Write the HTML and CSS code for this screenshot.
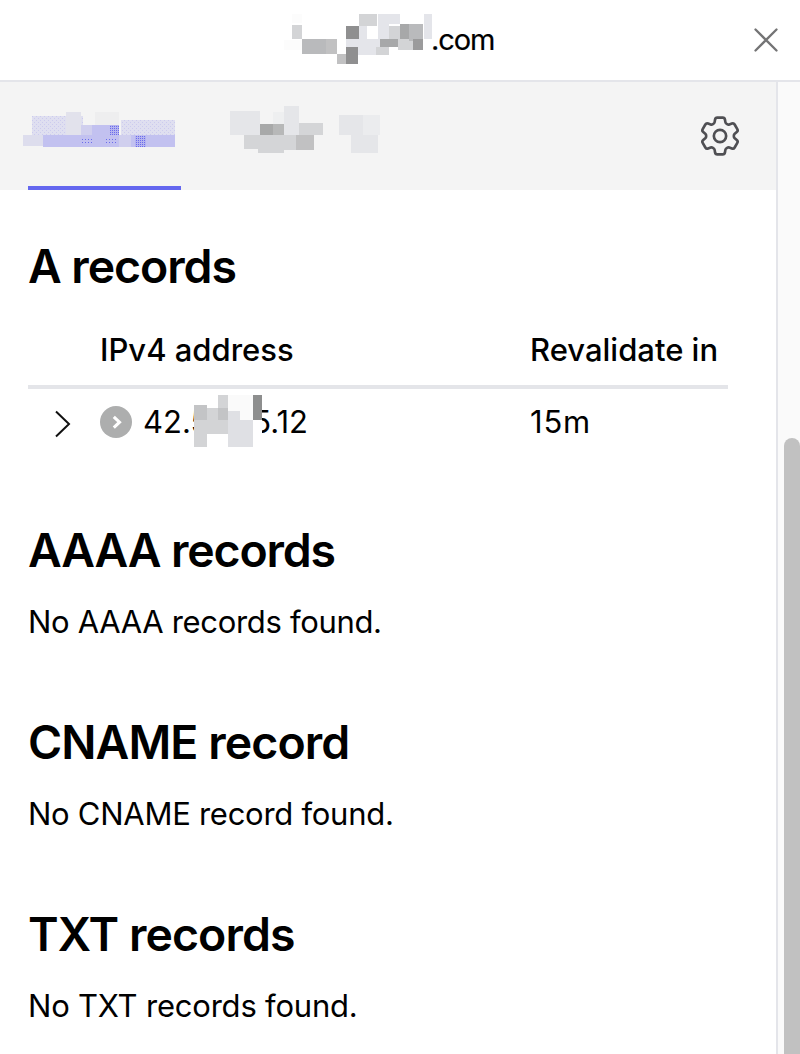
FILE: index.html
```html
<!DOCTYPE html>
<html lang="en">
<head>
<meta charset="utf-8">
<title>DNS records</title>
<link rel="stylesheet" href="styles.css">
</head>
<body>
<header class="titlebar">
  <div class="domain">
    <svg class="domain-mask" width="142" height="52" shape-rendering="crispEdges">
      <path fill="#fcfcfc" d="M2 2h10v9H2zM-6 28h18v10H-6z"/>
      <path fill="#d3d4d6" d="M2 13h10v14H2zM69 2h18v12H69zM99 14h11v15H99zM108 27h16v11h-16zM86 35h13v8H86z"/>
      <path fill="#b9babc" d="M12 27h24v15H12zM119 12h14v17h-14z"/>
      <path fill="#c1c1c2" d="M36 27h11v15H36zM47 42h9v10h-9z"/>
      <path fill="#8f8f90" d="M56 14h13v13H56zM56 35h12v17H56z"/>
      <path fill="#e4e5ea" d="M56 27h34v8H56zM68 35h18v8H68zM69 14h8v13h-8zM88 2h11v25H88zM99 2h11v10H99zM134 2h8v25h-8z"/>
      <path fill="#a7a8a9" d="M110 12h9v15h-9zM90 27h18v8H90z"/>
      <path fill="#9b9b9c" d="M123 27h10v11h-10z"/>
    </svg>
    <span class="suffix">.com</span>
  </div>
  <svg class="close" width="24" height="24"><path d="M1.5 1.5l21 21m0-21l-21 21" fill="none" stroke="#747475" stroke-width="2.3" stroke-linecap="round"/></svg>
</header>
<div class="body">
  <main class="panel">
    <nav class="tabs">
      <div class="tab active">
        <svg width="153" height="44" shape-rendering="crispEdges">
          <defs>
            <pattern id="mix" width="4" height="4" patternUnits="userSpaceOnUse"><path fill="#dfdff0" d="M0 0h4v4H0z"/><path fill="#cccbee" d="M0 0h1v1H0zM2 2h1v1H2z"/></pattern>
            <pattern id="dots" width="3" height="3" patternUnits="userSpaceOnUse"><path fill="#c2c1f0" d="M0 0h3v3H0z"/><path fill="#6b6cec" d="M0 0h1v1H0z"/></pattern>
            <pattern id="dense" width="2" height="2" patternUnits="userSpaceOnUse"><path fill="#b5b4ef" d="M0 0h2v2H0z"/><path fill="#6b6cec" d="M0 0h1v1H0z"/></pattern>
          </defs>
          <path fill="#dddded" d="M-5 23h20v11H-5z"/>
          <path fill="#eeeeef" d="M67 0h24v13H67z"/>
          <path fill="url(#mix)" d="M4 4h51v19H4zM93 8h54v15H93z"/>
          <path fill="#e2e2ec" d="M38 0h15v23H38z"/>
          <path fill="#c2c1f0" d="M15 23h132v12H15zM53 13h38v10H53z"/>
          <path fill="#d0cfee" d="M53 13h11v10H53zM91 23h12v12H91z"/>
          <path fill="url(#dots)" d="M53 25h13v8H53zM78 25h12v8H78z"/>
          <path fill="url(#dense)" d="M82 13h9v10h-9zM107 24h11v11h-11z"/>
        </svg>
      </div>
      <div class="tab">
        <svg width="151" height="48" shape-rendering="crispEdges">
          <path fill="#e5e6e9" d="M0 5h30v24H0zM54 0h15v29H54zM109 9h24v20h-24z"/>
          <path fill="#eeeff0" d="M43 6h11v12H43z"/>
          <path fill="#ebecee" d="M133 9h17v20h-17z"/>
          <path fill="#a8a9a9" d="M30 18h13v11H30z"/><path fill="#b7b8b8" d="M43 18h11v11H43z"/>
          <path fill="#d4d5d7" d="M69 17h24v12H69zM14 29h14v14H14zM28 29h26v18H28zM54 29h12v15H54z"/>
          <path fill="#c1c1c2" d="M66 29h18v15H66z"/><path fill="#e5e6e9" d="M121 29h27v18h-27z"/>
        </svg>
      </div>
      <svg class="gear" width="40" height="40" viewBox="2.244 2.244 19.512 19.512" fill="none" stroke="#4f4f53" stroke-width="1.3" stroke-linejoin="round">
        <path d="M9.594 3.94c.09-.542.56-.94 1.11-.94h2.593c.55 0 1.02.398 1.11.94l.213 1.281c.063.374.313.686.645.87.074.04.147.083.22.127.325.196.72.257 1.075.124l1.217-.456a1.125 1.125 0 0 1 1.37.49l1.296 2.247a1.125 1.125 0 0 1-.26 1.431l-1.003.827c-.293.241-.438.613-.43.992a7.723 7.723 0 0 1 0 .255c-.008.378.137.75.43.991l1.004.827c.424.35.534.955.26 1.43l-1.298 2.247a1.125 1.125 0 0 1-1.369.491l-1.217-.456c-.355-.133-.75-.072-1.076.124a6.47 6.47 0 0 1-.22.128c-.331.183-.581.495-.644.869l-.213 1.281c-.09.543-.56.94-1.11.94h-2.594c-.55 0-1.019-.398-1.11-.94l-.213-1.281c-.062-.374-.312-.686-.644-.87a6.52 6.52 0 0 1-.22-.127c-.325-.196-.72-.257-1.076-.124l-1.217.456a1.125 1.125 0 0 1-1.369-.49l-1.297-2.247a1.125 1.125 0 0 1 .26-1.431l1.004-.827c.292-.24.437-.613.43-.991a6.932 6.932 0 0 1 0-.255c.007-.38-.138-.751-.43-.992l-1.004-.827a1.125 1.125 0 0 1-.26-1.43l1.297-2.247a1.125 1.125 0 0 1 1.37-.491l1.216.456c.356.133.751.072 1.076-.124.072-.044.146-.086.22-.128.332-.183.582-.495.644-.869l.214-1.28Z"/>
        <circle cx="12" cy="12" r="3"/>
      </svg>
    </nav>
    <div class="content">
      <section>
        <h2 class="h-a">A records</h2>
        <div class="table">
          <div class="row head"><span></span><span>IPv4 address</span><span>Revalidate in</span></div>
          <div class="row">
            <svg class="chevron" width="18" height="28"><path d="M2 1.5L15 14L2 26.5" fill="none" stroke="#111" stroke-width="2"/></svg>
            <div class="address">
              <svg class="badge" width="32" height="32"><circle cx="16" cy="16" r="16" fill="#adaeae"/><path d="M13.8 10.8L19.5 16.2L13.8 21.6" fill="none" stroke="#fff" stroke-width="3.1"/></svg>
              <div class="ip"><span>42.5</span><span>5.12</span>
                <svg class="ip-mask" width="68" height="52" shape-rendering="crispEdges">
                  <path fill="#fff" d="M10 10h58v42H10z"/>
                  <path fill="#fafafa" d="M34 0h25v25H34z"/>
                  <path fill="#c3c4c6" d="M0 10h13v15H0zM24 13h10v12H24z"/>
                  <path fill="#d3d4d6" d="M24 0h10v13H24zM13 13h11v12H13zM0 25h34v14H0zM0 39h13v13H0z"/>
                  <path fill="#dfe0e4" d="M34 16h12v9H34zM34 25h25v27H34z"/>
                  <path fill="#8d8e8e" d="M59 0h9v25h-9z"/>
                </svg>
              </div>
            </div>
            <span class="ttl">15m</span>
          </div>
        </div>
      </section>
      <section><h2 class="h-aaaa">AAAA records</h2><p class="p-aaaa">No AAAA records found.</p></section>
      <section><h2>CNAME record</h2><p class="p-cname">No CNAME record found.</p></section>
      <section><h2>TXT records</h2><p class="p-txt">No TXT records found.</p></section>
    </div>
  </main>
  <aside class="scroll-track"><div class="thumb"></div></aside>
</div>
</body>
</html>
```
FILE: styles.css
```css
* { box-sizing: border-box; }
body {
  margin: 0; height: 1054px; overflow: hidden; background: #fff; color: #000;
  font: 400 31px/40px Inter, "Liberation Sans", sans-serif;
  display: flex; flex-direction: column;
}
svg { display: block; flex: none; overflow: visible; }
.titlebar {
  height: 82px; flex: none; border-bottom: 2px solid #e4e5ea;
  display: flex; align-items: center; justify-content: space-between; padding: 0 22px 0 290px;
}
.domain { display: flex; align-items: center; }
.domain-mask { margin-top: -4px; }
.suffix { font-size: 29px; margin-left: -1px; letter-spacing: -1.1px; -webkit-text-stroke: .2px #000; }
.body { flex: 1; min-height: 0; display: flex; }
.panel { width: 776px; }
.tabs { height: 108px; background: #f4f4f4; display: flex; padding: 0 36px 0 28px; }
.tab { padding-top: 30px; }
.tab.active { border-bottom: 4px solid #6467ef; margin-right: 49px; }
.tab:not(.active) { padding-top: 24px; }
.gear { margin: 34px 0 0 auto; }
.content { padding: 48px 48px 0 28px; }
section { margin-bottom: 72px; }
section:first-child { margin-bottom: 67px; }
section:last-child { margin-bottom: 0; }
h2 { margin: 0 0 24px; font-size: 46.4px; line-height: 56px; font-weight: 600; letter-spacing: -.9px; white-space: nowrap; }
.h-a { margin-bottom: 19px; letter-spacing: -1.05px; }
.h-aaaa { letter-spacing: -1.15px; }
p { margin: 0; white-space: nowrap; }
.p-aaaa { letter-spacing: -.32px; }
.p-cname { letter-spacing: -.27px; }
.p-txt { letter-spacing: -.2px; }
.ttl { letter-spacing: .8px; }
.row { height: 66px; display: grid; grid-template-columns: 72px 430px 198px; align-items: center; }
.head { height: 76px; padding-top: 2px; border-bottom: 4px solid #e4e5e9; font-weight: 500; }
.chevron { margin: 4px 0 0 26px; }
.address { display: flex; align-items: center; gap: 11px; }
.ip { position: relative; width: 165px; display: flex; justify-content: space-between; }
.ip-mask { position: absolute; left: 51px; top: -7px; }
.scroll-track { width: 24px; border-left: 2px solid #e4e5ea; background: #fafafa; padding: 356px 0 0 6px; }
.thumb { height: 616px; border-radius: 8px 8px 0 0; background: #c1c1c1; }
```
